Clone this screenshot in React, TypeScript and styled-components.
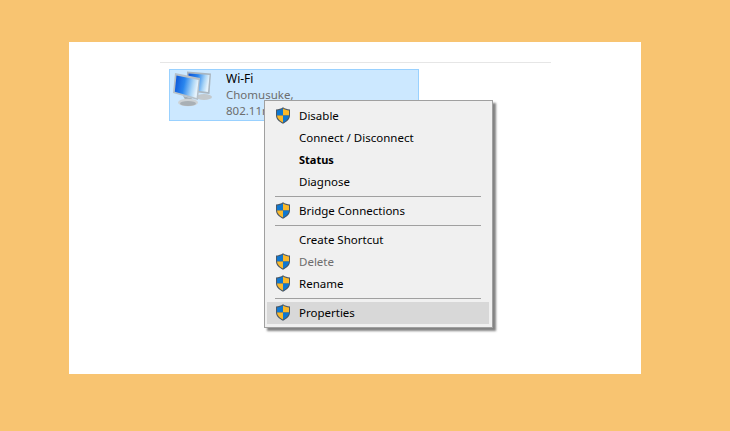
import * as React from 'react';
import styled, { createGlobalStyle } from 'styled-components';

const GlobalStyle = createGlobalStyle`
  html, body {
    margin: 0;
    padding: 0;
    background: #f8c471;
    font-family: 'Noto Sans', 'Open Sans', sans-serif;
  }
`;

const Page = styled.div`
  width: 730px;
  height: 431px;
  padding: 42px 89px 57px 69px;
  box-sizing: border-box;
  overflow: hidden;
`;

const Panel = styled.div`
  position: relative;
  width: 572px;
  height: 332px;
  background: #fff;
  padding: 20px 0 0 91px;
  box-sizing: border-box;
`;

const Toolbar = styled.div`
  width: 391px;
  height: 1px;
  background: #e6e6e6;
  margin-bottom: 6px;
`;

const ConnectionItem = styled.div`
  width: 250px;
  height: 52px;
  margin-left: 9px;
  box-sizing: border-box;
  background: #cce8ff;
  border: 1px solid #99d1ff;
  display: flex;
  padding: 0 0 0 3px;
`;

const ConnectionIcon = styled.svg`
  width: 46px;
  height: 42px;
  flex: none;
`;

const ConnectionText = styled.div`
  margin-left: 7px;
  padding-top: 1px;
  font-size: 11.5px;
  line-height: 16px;
  color: #6d6d6d;
`;

const ConnectionName = styled.div`
  color: #000;
  font-size: 12px;
`;

const Menu = styled.div`
  position: absolute;
  left: 195px;
  top: 58px;
  width: 229px;
  height: 228px;
  box-sizing: border-box;
  background: #f0f0f0;
  border: 1px solid #a0a0a0;
  padding: 4px 3px 3px 2px;
  box-shadow: 3px 3px 2px rgba(90, 90, 90, 0.75);
`;

const MenuRow = styled.div<{ $active?: boolean; $disabled?: boolean; $bold?: boolean }>`
  display: flex;
  align-items: center;
  height: 22px;
  padding: 0 0 2px 32px;
  box-sizing: border-box;
  position: relative;
  font-size: ${p => (p.$bold ? '11px' : '11.5px')};
  color: ${p => (p.$disabled ? '#6d6d6d' : '#000')};
  font-weight: ${p => (p.$bold ? 700 : 400)};
  background: ${p => (p.$active ? '#d8d8d8' : 'transparent')};
`;

const ShieldSlot = styled.svg`
  position: absolute;
  left: 8px;
  top: 2px;
  width: 16px;
  height: 17px;
`;

const Separator = styled.div`
  height: 1px;
  margin: 3px 8px 3px 8px;
  background: #a0a0a0;
`;

const Shield = () => (
  <ShieldSlot viewBox="0 0 16 17">
    <path d="M8 .3C6 1.600 3.800 2.400 1 2.600V8.500c0 3.600 3 6.200 7 8.200 4-2 7-4.600 7-8.200V2.600C12.200 2.400 10 1.600 8 .3z" fill="#4a5866" />
    <path d="M8 1.600C6.300 2.700 4.300 3.400 2 3.600v4.900h6z" fill="#0f78d2" />
    <path d="M8 1.600C9.700 2.700 11.700 3.400 14 3.600v4.900H8z" fill="#fbb92a" />
    <path d="M2 8.500h6v7C4.800 13.900 2.200 11.700 2 8.500z" fill="#fbb92a" />
    <path d="M14 8.500H8v7c3.200-1.600 5.800-3.800 6-7z" fill="#0f78d2" />
  </ShieldSlot>
);

const NetworkIcon = () => (
  <ConnectionIcon viewBox="0 0 46 42">
    <defs>
      <linearGradient id="screen" x1="0" y1="0" x2="1" y2="0.2">
        <stop offset="0" stopColor="#0a50d6" />
        <stop offset="0.45" stopColor="#2a86ee" />
        <stop offset="0.8" stopColor="#a8d4f6" />
        <stop offset="1" stopColor="#e4f2fc" />
      </linearGradient>
    </defs>
    <ellipse cx="31" cy="27" rx="8" ry="3" fill="#c3c9cd" />
    <path d="M14 1.500L38 3.500 36.500 24 14 21z" fill="#aab6c0" />
    <path d="M15.500 3.500L36.500 5 35 22 15.500 19.500z" fill="url(#screen)" />
    <path d="M2 3L27 8 25 30 0 23z" fill="#b6c0c8" />
    <path d="M3.500 5.500L25.500 10 23.600 28 1.800 21.800z" fill="url(#screen)" />
    <path d="M10 26l9 2.500.5 3-6.500-.5z" fill="#a4adb3" />
    <ellipse cx="15" cy="32.500" rx="10" ry="3.800" fill="#cdd2d5" />
    <ellipse cx="15" cy="33.500" rx="8" ry="2.400" fill="#a9b0b5" />
  </ConnectionIcon>
);

export default function App() {
  return (
    <Page>
      <GlobalStyle />
      <Panel>
        <Toolbar />
        <ConnectionItem>
          <NetworkIcon />
          <ConnectionText>
            <ConnectionName>Wi-Fi</ConnectionName>
            <div>Chomusuke,</div>
            <div>802.11n</div>
          </ConnectionText>
        </ConnectionItem>
        <Menu>
          <MenuRow><Shield />Disable</MenuRow>
          <MenuRow>Connect / Disconnect</MenuRow>
          <MenuRow $bold>Status</MenuRow>
          <MenuRow>Diagnose</MenuRow>
          <Separator />
          <MenuRow><Shield />Bridge Connections</MenuRow>
          <Separator />
          <MenuRow>Create Shortcut</MenuRow>
          <MenuRow $disabled><Shield />Delete</MenuRow>
          <MenuRow><Shield />Rename</MenuRow>
          <Separator />
          <MenuRow $active><Shield />Properties</MenuRow>
        </Menu>
      </Panel>
    </Page>
  );
}
